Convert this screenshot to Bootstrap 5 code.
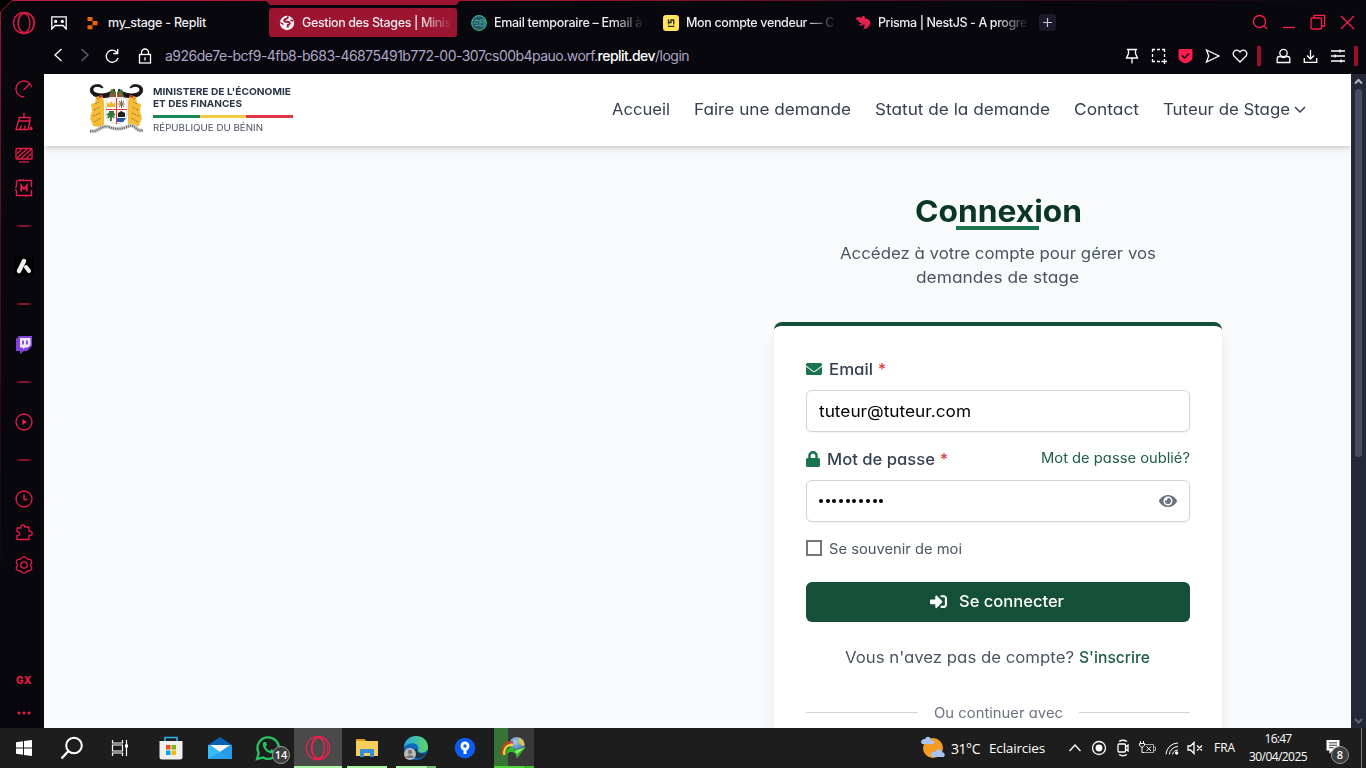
<!DOCTYPE html>
<html lang="fr">
<head>
<meta charset="utf-8">
<meta name="viewport" content="width=device-width, initial-scale=1">
<title>Gestion des Stages</title>
<link href="https://cdn.jsdelivr.net/npm/bootstrap@5.3.0/dist/css/bootstrap.min.css" rel="stylesheet">
<style>
:root{--gx:#fa1e4e;--ui:#08070d}
html,body{height:768px;overflow:hidden}
body{font-family:"Inter","Liberation Sans",sans-serif;background:var(--ui);color:#fff}
svg{display:block;flex:none}
.screen{width:1366px;height:768px;position:relative}
.middle{height:654px}
.ln{fill:none;stroke:currentColor;stroke-width:1.3}
.fit{display:inline-block;white-space:pre}
.frame-edge{position:absolute;left:0;top:0;z-index:3;pointer-events:none}
.tabstrip{height:40px;padding:5px 0 0}
.tabstrip .brand-cell{width:77px;padding-left:12px;gap:15px;height:36px}
.btab{width:188px;height:29px;margin-right:4px;padding-left:10px;gap:7px;border-radius:3px;font-size:12.5px;font-weight:500;color:#ececf0;margin-top:3px}
.btab.on{background:#9b1430}
.btab .ttl{width:150px;line-height:20px}
.btab .fade-end{-webkit-mask-image:linear-gradient(90deg,#000 118px,transparent 151px);mask-image:linear-gradient(90deg,#000 118px,transparent 151px)}
.newtab{width:17px;height:17px;border-radius:3px;background:#1c1a28;margin:9px 0 0 2px}
.winbtns{display:grid;grid-template-columns:30px 28px 30px 28px;color:var(--gx);margin-right:5px;height:36px;align-items:center;justify-items:center;margin-top:-1px}
.urlrow{height:34px;padding-bottom:3px}
.urlnav{display:grid;grid-template-columns:28px 26px 28px 38px;margin-left:44px;justify-items:center}
.urltext{font-size:14px;color:#aea5c6;line-height:20px;margin-left:1px}
.urltext b{font-weight:500;color:#fff}
.urltools{display:grid;grid-template-columns:repeat(5,27px) 12px 32px 27px 28px 8px;justify-items:center;align-items:center;margin-right:6px}
.redbar{width:4px;height:20px;background:#97112d;border-radius:1px}
.side{width:44px;color:#e81c49;display:grid;justify-items:center;align-items:center;padding-left:4px;grid-template-rows:30px 36px 30px 36px 40px 40px 36px 42px 36px 44px 32px 46px 20px 46px 80px 24px 36px}
.side hr{margin:0;border:0;opacity:1;width:18px;height:2px;background:linear-gradient(90deg,transparent,#851530 30%,#851530 70%,transparent)}
.gxword{font-size:10px;font-weight:800;line-height:12px}
.site{width:1307px;height:654px;background:#f9fafb;overflow:hidden;color:#374151;font-feature-settings:"cv11"}
.topnav{height:72px;background:#fff;box-shadow:0 4px 6px -1px rgba(0,0,0,.14),0 2px 4px -2px rgba(0,0,0,.12);padding:0 45px 0 43px;position:relative}
.topnav nav{padding-bottom:2px}
.topnav a{color:#374151;text-decoration:none;font-size:16px;line-height:24px}
.ministry{font-feature-settings:normal;color:#2b3445;padding-left:8px}
.ministry div{height:12px;line-height:12px;font-size:9.6px;font-weight:700}
.ministry .rep{font-weight:400;font-size:9px;color:#4b5563}
.flagline{height:3px!important;width:140px;margin:5px 0 3px}
.flagline i{flex:1}
.flagline .g{background:#198754}.flagline .y{background:#f6c945}.flagline .r{background:#e23744}
.pane{width:706px;padding-top:46px}
.h-login{font-size:30px;font-weight:700;color:#0a3626;line-height:39px;height:39px;margin:0}
.bar-u{width:83px;height:4px;background:#1a7450;margin:-5px 0 0 -1px}
.sub{font-size:16px;line-height:24px;color:#4b5563;margin:11px 0 33px -1px}
.logincard{width:448px;height:520px;border-top:4px solid #144f38;border-radius:8px;background:#fff;box-shadow:0 10px 15px -3px rgba(0,0,0,.1),0 4px 6px -4px rgba(0,0,0,.1);padding:31px 32px}
.lbl{height:24px;line-height:24px;font-size:16px;font-weight:500;color:#374151;gap:7px}
.lbl svg{fill:#1a7450}
.lbl svg{margin-left:0}
.req{color:#e03131;font-weight:400;margin-left:-2px}
.forgot{font-size:14px;font-weight:400;margin-top:-2px}
.field{height:42px;border:1px solid #d1d5db;border-radius:6px;background:#fff;color:#000;padding:0 12px 1px;box-shadow:0 1px 2px rgba(0,0,0,.06);font-size:16px;margin:9px 0 15px}
.dots{gap:2.7px}
.dots i{width:4px;height:4px;border-radius:50%;background:#000}
.link-g{color:#1c5d43;text-decoration:none}
.remember{height:20px;margin-top:16px;font-size:14px;gap:7px}
.box16{width:16px;height:16px;border:2px solid #767676;background:#fff}
.go{height:40px;border-radius:6px;background:#144f38;color:#fff;font-size:16px;font-weight:500;border:0;padding:0 2px 2px 0;gap:12px}
.signup{margin:23px 0 0 -1px;line-height:24px}
.signup a{font-weight:500}
.orline{margin-top:33px;height:20px;font-size:14px;color:#6b7280}
.dim{color:#4b5563}
.rule{height:1px;background:#d1d5db;flex:1}
.sbar{width:15px;background:#242735}
.thumb{width:7px;height:368px;border-radius:4px;background:#494b62;margin-top:1px}
.task{height:40px;background:#1d1d1d;font-family:"Open Sans","Noto Sans",sans-serif;color:#fff}
.apps{display:grid;grid-template-columns:48px 48px 48px 54px 44px 52px 48px 50px 48px 50px 48px;height:40px}
.app{display:flex;align-items:center;justify-content:center;position:relative}
.app::after{content:"";position:absolute;bottom:0;height:2px;width:0;background:#a9f5a5}
.app-front{background:#4a4a4a}
.app-front::after{width:48px}
.app-open::after{width:40px}
.app-edge::after{background:linear-gradient(90deg,#a9f5a5 31px,#587a57 31px,#7cb77a 32px)}
.app-idm{background:linear-gradient(90deg,transparent 4px,#387336 4px 18px,#383838 18px 44px,transparent 44px)}
.app-idm::after{background:linear-gradient(90deg,#4bd437 31px,#287e20 31px,#42b934 32px)}
.cnt{position:absolute;top:18px;border-radius:50%;background:#3d3d3d;border:1px solid #989898;width:18px;height:18px;line-height:15px;font-size:11px;font-weight:600;text-align:center}
.cnt-chat{left:30px}.cnt-note{left:7px}
.temp{font-size:14px;margin-left:6px}
.sky{font-size:13.5px;margin-left:9px}
.lang{font-size:12px;margin-left:9px}
.tray{display:grid;grid-template-columns:24px 24px 24px 24px 26px 20px;justify-items:center;align-items:center;margin-left:18px}
.clock{width:60px;font-size:12px;line-height:18px;text-align:center;margin-left:13px}
.notes{margin-left:16px;width:52px;height:40px}
.peek{width:1px;background:#77777a;margin:0 4px 0 -15px}
</style>
</head>
<body>
<div class="screen d-flex flex-column">
  <svg class="frame-edge" width="1366" height="640" viewBox="0 0 1366 640"><defs><linearGradient id="eh" gradientUnits="userSpaceOnUse" x1="0" y1="0" x2="1366" y2="0"><stop offset="0" stop-color="#c21a3e"/><stop offset=".4" stop-color="#a01634"/><stop offset=".7" stop-color="#3a0c1c"/><stop offset="1" stop-color="#08070d"/></linearGradient><linearGradient id="ev" gradientUnits="userSpaceOnUse" x1="0" y1="0" x2="0" y2="600"><stop offset="0" stop-color="#a01634"/><stop offset=".3" stop-color="#5d1024"/><stop offset="1" stop-color="#08070d"/></linearGradient></defs><path d="M0 0H12L0 12Z" fill="#000"/><path d="M12 .5H1366" stroke="url(#eh)"/><path d="M.5 12V600" stroke="url(#ev)"/><path d="M12 .5L.5 12" stroke="#a01634"/><path d="M265 0L270 5H456L461 0Z" fill="#9b1430"/></svg>

  <div class="tabstrip d-flex align-items-start">
    <div class="brand-cell d-flex align-items-center">
      <svg width="24" height="24" viewBox="0 0 24 24" fill="none" stroke="#d91d48" stroke-width="1.3"><circle cx="12" cy="12" r="10.5"/><ellipse cx="12" cy="12" rx="6" ry="9.7"/><ellipse cx="14" cy="12" rx="7.5" ry="9.5" stroke-width=".7"/></svg>
      <svg width="16" height="14" viewBox="0 0 16 14" fill="none" stroke="#fff" stroke-width="1.3"><path d="M.8.8H15.2V13L12 9.5H4L.8 13Z"/><circle cx="4.700" cy="5.400" r="1" fill="#fff"/><circle cx="11.300" cy="5.400" r="1" fill="#fff"/></svg>
    </div>
    <div class="btab d-flex align-items-center"><svg width="14" height="16" viewBox="0 0 14 16" fill="#f26207"><path d="M.5 2H5.500V6H.5ZM5.500 6H10.500V10.200H5.500ZM.5 10.200H5.500V14.300H.5Z"/></svg><div class="ttl"><span class="fit" data-w="98">my_stage - Replit</span></div></div>
    <div class="btab on d-flex align-items-center"><svg width="16" height="16" viewBox="0 0 16 16"><circle cx="8" cy="8" r="7.200" fill="#f0eef2"/><path d="M9.500 2C8 2.500 8.500 3.500 7 4C5 4.500 4.500 6 6 6.500L9.500 7C11.500 7.500 11 10 9 10L8.500 12.500" fill="none" stroke="#9b1430" stroke-width="1.900"/><path d="M1.500 7.500L4.500 9.500M11.500 5L14 6" stroke="#9b1430" stroke-width="1.500"/></svg><div class="ttl fade-end"><span class="fit" data-w="149">Gestion des Stages | Minis</span></div></div>
    <div class="btab d-flex align-items-center"><svg width="16" height="16" viewBox="0 0 16 16"><circle cx="8" cy="8" r="7.300" fill="#394b60" stroke="#22b996" stroke-width="1.300"/><path d="M3 5.500H8M2.500 8H7M4 10.500H8M9 5H13V11H9ZM9 6L11 8L13 6" fill="none" stroke="#2cb79b"/></svg><div class="ttl fade-end"><span class="fit" data-w="148">Email temporaire – Email à</span></div></div>
    <div class="btab d-flex align-items-center"><svg width="16" height="16" viewBox="0 0 16 16"><rect width="16" height="16" rx="3" fill="#ffe45c"/><path d="M5.500 4.500V7.500H8V5H10.700V8M8 5V4.500" fill="none" stroke="#29261a" stroke-width="1.300"/><path d="M5 11.300H11.300M5.500 9.500V8.300M10.800 9.500V8" fill="none" stroke="#29261a" stroke-width="1.300"/></svg><div class="ttl fade-end"><span class="fit" data-w="148">Mon compte vendeur — C</span></div></div>
    <div class="btab d-flex align-items-center"><svg width="16" height="16" viewBox="0 0 16 16" fill="#e0234e"><path d="M.5 4C2 1.500 5 1.500 6.500 3C6 1.800 7 1 8.500 1C10 1 10 2.500 9.500 3.500C12 3 15.500 5 15.500 8.500L14.500 9L15 11L13 11.500L12 13.500L10 13.500L8.500 15C8.500 13 10.500 11 9 9C8 10.500 5 11.300 3 10C4.500 10 6 9.500 6.500 8C4 8 3 7 3.500 5.500Z"/></svg><div class="ttl fade-end"><span class="fit" data-w="149">Prisma | NestJS - A progre</span></div></div>
    <div class="newtab d-flex align-items-center justify-content-center"><svg width="11" height="11" viewBox="0 0 11 11" stroke="#c8c2dc" stroke-width="1.200"><path d="M5.500 1V10M1 5.500H10"/></svg></div>
    <div class="winbtns ms-auto">
      <svg width="16" height="16" viewBox="0 0 16 16" class="ln"><circle cx="7.500" cy="7.500" r="6"/><path d="M12 12L15 15"/></svg>
      <svg width="14" height="16" viewBox="0 0 14 16" class="ln"><path d="M1 13.500H13"/></svg>
      <svg width="16" height="16" viewBox="0 0 16 16" class="ln"><rect x="1" y="4" width="10.500" height="11" rx="1"/><path d="M4 4V1.300H14.600V12H11.500"/></svg>
      <svg width="15" height="15" viewBox="0 0 15 15" class="ln"><path d="M1 1L14 14M14 1L1 14"/></svg>
    </div>
  </div>

  <div class="urlrow d-flex align-items-center">
    <div class="urlnav">
      <svg width="12" height="14" viewBox="0 0 12 14" class="ln"><path d="M9.500 1L3 7L9.500 13"/></svg>
      <svg width="12" height="14" viewBox="0 0 12 14" class="ln" color="#66656b"><path d="M2.500 1L9 7L2.500 13"/></svg>
      <svg width="16" height="16" viewBox="0 0 16 16" class="ln"><path d="M13 4.500A6 6 0 1 0 14 10M13.700 1V5.500H9.300"/></svg>
      <svg width="14" height="16" viewBox="0 0 14 16" class="ln"><rect x="1.500" y="6.500" width="11" height="8.500"/><path d="M3.500 6.500V4.500A3.500 3.500 0 0 1 10.500 4.500V6.500M7 9.300V12.500"/></svg>
    </div>
    <div class="urltext"><span class="fit" data-w="524">a926de7e-bcf9-4fb8-b683-46875491b772-00-307cs00b4pauo.worf.<b>replit.dev</b>/login</span></div>
    <div class="urltools ms-auto">
      <svg width="14" height="16" viewBox="0 0 14 16" class="ln"><path d="M2 1.500H12M3.500 1.500V5.500L1.500 10H12.500L10.500 5.500V1.500M7 10V15.500"/></svg>
      <svg width="16" height="16" viewBox="0 0 16 16" class="ln"><path d="M1.500 4V1.500H4M6 1.500H9M11 1.500H13.500V4M13.500 6V9M1.500 6V9M1.500 11V13.500H4M6 13.500H9M10.500 13.500H16M13.500 11V16"/></svg>
      <svg width="15" height="16" viewBox="0 0 15 16"><path d="M1.500 1H13.500L14.500 2V9.500C14.500 13 10 14.500 7.500 15.500C5 14.500.5 13 .5 9.500V2Z" fill="#fa1e4e"/><path d="M4 7.500L6.700 10L11 5.500" fill="none" stroke="#12070d" stroke-width="1.400"/></svg>
      <svg width="15" height="16" viewBox="0 0 15 16" class="ln"><path d="M1.500 2L14 8L1.500 14L3.700 8Z"/></svg>
      <svg width="16" height="16" viewBox="0 0 16 16" class="ln"><path d="M8 14L2 8C-.5 4.500 3.500.5 7 3L8 4L9 3C12.500.5 16.500 4.500 14 8Z"/></svg>
      <div class="redbar"></div>
      <svg width="15" height="16" viewBox="0 0 15 16" class="ln ms-1"><circle cx="7.500" cy="5" r="3.700"/><path d="M4.500 8.500H3A2 2 0 0 0 1.200 10.500V14.500H13.800V10.500A2 2 0 0 0 12 8.500H10.500C9.500 10 5.500 10 4.500 8.500Z"/></svg>
      <svg width="15" height="16" viewBox="0 0 15 16" class="ln"><path d="M1.300 10V14.300H13.700V10M7.500 2V10.500M4 7.500L7.500 11L11 7.500"/></svg>
      <svg width="16" height="16" viewBox="0 0 16 16" class="ln"><path d="M1 3H15M1 8H15M1 13H15"/><path d="M10 1.500V4.500M5 6.500V9.500M11 11.500V14.500"/></svg>
      <div class="redbar"></div>
    </div>
  </div>

  <div class="middle d-flex">
    <nav class="side">
      <svg width="18" height="18" viewBox="0 0 18 18" class="ln"><path d="M9 17A8 8 0 1 1 16.800 7.500M8.500 10L14.500 4"/></svg>
      <svg width="18" height="18" viewBox="0 0 18 18" class="ln"><path d="M9 0V4M4 4.500H15V8H4ZM3.500 8L1 16.500H13L15 8M5 16L6.500 12.500M9 16L10.500 12.500"/><circle cx="16" cy="15.500" r="1" fill="currentColor"/></svg>
      <svg width="18" height="16" viewBox="0 0 18 16" class="ln"><rect x="1" y="1.500" width="16" height="10.500" rx="1"/><path d="M2 6.500L7 2M2 11L12 2M6 11.500L16.500 2M11 11.500L16.500 6.500M4 14.800H14"/></svg>
      <svg width="18" height="18" viewBox="0 0 18 18" class="ln"><path d="M2 1.500H16.500V8M16.500 11V16.500H1.500V12M1.500 7V1.500M5 0V1.500M8 0V1.500M0 8H2M0 11H2M11 16.500V18"/><path d="M6.200 12.500V6.500L9 10L11.800 6.500V12.500" stroke-width="1.800"/></svg>
      <hr>
      <svg width="20" height="20" viewBox="0 0 20 20"><rect width="20" height="20" rx="3" fill="#000"/><path d="M10 5L5 15" stroke="#eee" stroke-width="4.500" stroke-linecap="round"/><path d="M12 11L15 15" stroke="#eee" stroke-width="4" stroke-linecap="round"/></svg>
      <hr>
      <svg width="18" height="18" viewBox="0 0 18 18" class="mt-1"><path d="M4 0H17V10L12 15H9L5 18V15H1V3Z" fill="#8142e0"/><path d="M5 2H15.500V9L13 11.500H10L8 13.500V11.500H5Z" fill="#efeaf7"/><path d="M8 4.500V8.500M12 4.500V8.500" stroke="#8142e0" stroke-width="1.800"/></svg>
      <hr>
      <svg width="18" height="18" viewBox="0 0 18 18" class="ln"><circle cx="9" cy="9" r="8"/><path d="M7.300 6V12L12 9Z" fill="currentColor" stroke="none"/></svg>
      <hr>
      <svg width="18" height="18" viewBox="0 0 18 18" class="ln"><circle cx="9" cy="9" r="8"/><path d="M9 4.500V9.500H12.500"/></svg>
      <svg width="18" height="17" viewBox="0 0 18 17" class="ln" stroke-linejoin="round"><path d="M2 4H6C5 0 10.500 0 9.500 3H14V7C18 6.500 18.500 12 14 11.500V15.500H2V11.500C5.500 12 5.500 7 2 7.500Z"/></svg>
      <svg width="18" height="18" viewBox="0 0 18 18" class="ln" stroke-linejoin="round"><path d="M7 1.500Q9 .3 11 1.500Q12 3.500 14.200 3.200Q16.500 3.500 16.800 5.500Q16.700 7 15.800 8.200Q15.300 9 15.800 9.800Q16.700 11 16.800 12.500Q16.500 14.500 14.200 14.800Q12 14.500 11 16.500Q9 17.700 7 16.500Q6 14.500 3.800 14.800Q1.500 14.500 1.200 12.500Q1.300 11 2.200 9.800Q2.700 9 2.200 8.200Q1.300 7 1.200 5.500Q1.500 3.500 3.800 3.200Q6 3.500 7 1.500Z"/><circle cx="9" cy="9" r="3.200"/></svg>
      <span></span>
      <span class="gxword"><span class="fit" data-w="16">GX</span></span>
      <svg width="14" height="10" viewBox="0 0 14 10" fill="currentColor"><circle cx="2" cy="8" r="1.500"/><circle cx="7" cy="8" r="1.500"/><circle cx="12" cy="8" r="1.500"/></svg>
    </nav>

    <main class="site">
      <header class="topnav d-flex align-items-center justify-content-between">
        <div class="d-flex align-items-center">
          <svg width="58" height="52" viewBox="0 0 58 52">
            <path d="M16 4C6 -1 3 7 9 9C14 11 22 10 27 5L28 9C24 14 18 14 11 13C2 12 1 2 8 1C12 0 15 1 16 4ZM43 4C52 -1 56 7 50 9C45 11 37 10 32 5L31 9C35 14 41 14 48 13C57 12 58 2 51 1C47 0 44 1 43 4Z" fill="#171717" stroke="#171717"/>
            <path d="M24 5L29 8V13H22ZM35 5L30 8V13H37Z" fill="#4f7037"/><path d="M24 9L28 10V13H23ZM35 9L31 10V13H36Z" fill="#9e5231"/>
            <path d="M15 11L9 13L8 19L4 20L5 27L3 34L6 42L12 43L17 41V17ZM43 11L49 13L50 19L54 20L53 27L55 34L52 42L46 43L41 41V17Z" fill="#f3bd3a"/>
            <path d="M8 20L12 18M7 26L13 23M6 32L13 29M7 38L14 34M10 14L13 16M50 20L46 18M51 26L45 23M52 32L45 29M51 38L44 34M48 14L45 16" stroke="#a37022" stroke-dasharray="2 1"/>
            <path d="M12 13L15 12M46 13L43 12" stroke="#c42525" stroke-width="2"/>
            <path d="M19 14H40V31C40 37 34 39 29.500 40C25 39 19 37 19 31Z" fill="#fff" stroke="#bbb" stroke-width=".6"/>
            <path d="M20 22V18L22 20L24 17L26 20L28 18V23H20Z" fill="#f3b72f"/><path d="M31 20H38M34.500 16V24M32 17L37 23M37 17L32 23" stroke="#776039"/>
            <path d="M24 37V29M20 31L24 28L28 31M21 34L24 29L27 34M22 28H27" stroke="#357339" stroke-width="1.800" fill="none"/>
            <path d="M31 29L34 27L38 29V33H31Z" fill="#222"/><path d="M30 34H39L36 38H30Z" fill="#235aa5"/>
            <path d="M19 25.500H40M29.500 14V40" stroke="#df4141" stroke-width="1.200"/>
            <path d="M3 47C12 49 14 40 22 43S36 45 42 42S49 49 56 46" fill="none" stroke="#d4d4d4" stroke-width="4"/><path d="M3 47C12 49 14 40 22 43S36 45 42 42S49 49 56 46" fill="none" stroke="#666" stroke-width="2" stroke-dasharray="1.200 1"/>
          </svg>
          <div class="ministry wide">
            <div><span class="fit" data-w="138">MINISTERE DE L'ÉCONOMIE</span></div>
            <div><span class="fit" data-w="89">ET DES FINANCES</span></div>
            <div class="flagline d-flex"><i class="g"></i><i class="y"></i><i class="r"></i></div>
            <div class="rep mt-1"><span class="fit" data-w="110">RÉPUBLIQUE DU BÉNIN</span></div>
          </div>
        </div>
        <nav class="wide d-flex align-items-center gap-4">
          <a href="#" class="fit" data-w="58">Accueil</a>
          <a href="#" class="fit" data-w="157">Faire une demande</a>
          <a href="#" class="fit" data-w="175">Statut de la demande</a>
          <a href="#" class="fit" data-w="65">Contact</a>
          <span class="d-flex align-items-center gap-1"><a href="#" class="fit" data-w="127">Tuteur de Stage</a><svg width="12" height="12" viewBox="0 0 12 12" fill="none" stroke="#374151" stroke-width="1.500"><path d="M1 4L6 9L11 4"/></svg></span>
        </nav>
      </header>
      <section class="pane wide ms-auto d-flex flex-column align-items-center">
        <h1 class="h-login"><span class="fit" data-w="167">Connexion</span></h1>
        <div class="bar-u"></div>
        <p class="sub text-center"><span class="fit" data-w="316">Accédez à votre compte pour gérer vos</span><br><span class="fit" data-w="163">demandes de stage</span></p>
        <form class="logincard" onsubmit="return false">
          <div class="lbl d-flex align-items-center"><svg width="16" height="16" viewBox="0 0 512 512"><path d="M502.300 190.800c3.900-3.100 9.700-.2 9.700 4.700V400c0 26.500-21.500 48-48 48H48c-26.500 0-48-21.500-48-48V195.600c0-5 5.700-7.800 9.700-4.700 22.400 17.400 52.100 39.500 154.100 113.600 21.100 15.400 56.700 47.800 92.200 47.600 35.700.3 72-32.800 92.300-47.600 102-74.100 131.600-96.300 154-113.700zM256 320c23.200.4 56.600-29.200 73.400-41.400 132.700-96.300 142.800-104.700 173.400-128.700 5.800-4.500 9.200-11.500 9.200-18.900v-19c0-26.500-21.500-48-48-48H48c-26.500 0-48 21.500-48 48v19c0 7.400 3.400 14.300 9.200 18.900 30.600 23.900 40.700 32.400 173.400 128.700 16.800 12.200 50.200 41.800 73.400 41.400z"/></svg><span class="fit" data-w="44">Email</span><span class="req">*</span></div>
          <div class="field d-flex align-items-center"><span class="fit" data-w="152">tuteur@tuteur.com</span></div>
          <div class="lbl d-flex align-items-center"><svg width="14" height="16" viewBox="0 0 448 512"><path d="M400 224h-24v-72C376 68.200 307.800 0 224 0S72 68.200 72 152v72H48c-26.500 0-48 21.500-48 48v192c0 26.500 21.500 48 48 48h352c26.500 0 48-21.500 48-48V272c0-26.500-21.500-48-48-48zm-104 0H152v-72c0-39.700 32.300-72 72-72s72 32.300 72 72v72z"/></svg><span class="fit" data-w="108">Mot de passe</span><span class="req">*</span><a href="#" class="link-g forgot ms-auto"><span class="fit" data-w="149">Mot de passe oublié?</span></a></div>
          <div class="field d-flex align-items-center justify-content-between"><span class="dots d-flex"><i></i><i></i><i></i><i></i><i></i><i></i><i></i><i></i><i></i><i></i></span><svg width="18" height="16" viewBox="0 0 576 512" fill="#6b7280"><path d="M572.520 241.400C518.290 135.590 410.930 64 288 64S57.680 135.640 3.480 241.410a32.350 32.350 0 0 0 0 29.190C57.710 376.410 165.070 448 288 448s230.320-71.640 284.520-177.410a32.350 32.350 0 0 0 0-29.190zM288 400a144 144 0 1 1 144-144 143.930 143.930 0 0 1-144 144zm0-240a95.310 95.310 0 0 0-25.310 3.790 47.850 47.850 0 0 1-66.900 66.900A95.780 95.780 0 1 0 288 160z"/></svg></div>
          <div class="remember d-flex align-items-center"><span class="box16"></span><span class="fit dim" data-w="133">Se souvenir de moi</span></div>
          <button class="go w-100 d-flex align-items-center justify-content-center mt-4"><svg width="17" height="17" viewBox="0 0 512 512" fill="#fff"><path d="M416 448h-84c-6.600 0-12-5.400-12-12v-40c0-6.600 5.400-12 12-12h84c17.700 0 32-14.300 32-32V160c0-17.700-14.300-32-32-32h-84c-6.600 0-12-5.400-12-12V76c0-6.600 5.400-12 12-12h84c53 0 96 43 96 96v192c0 53-43 96-96 96zm-47-201L201 79c-15-15-41-4.500-41 17v96H24c-13.300 0-24 10.700-24 24v96c0 13.300 10.700 24 24 24h136v96c0 21.500 26 32 41 17l168-168c9.300-9.400 9.300-24.600 0-34z"/></svg><span class="fit" data-w="105">Se connecter</span></button>
          <p class="signup text-center dim"><span class="fit" data-w="229">Vous n'avez pas de compte?</span> <a href="#" class="link-g"><span class="fit" data-w="71">S'inscrire</span></a></p>
          <div class="orline d-flex align-items-center gap-3"><span class="rule"></span><span class="fit" data-w="129">Ou continuer avec</span><span class="rule"></span></div>
        </form>
      </section>
    </main>

    <div class="sbar d-flex flex-column align-items-center">
      <svg width="9" height="14" viewBox="0 0 9 14" fill="none" stroke="#b5b5bd" stroke-width="2"><path d="M1 9.500L4.500 6L8 9.500"/></svg>
      <div class="thumb"></div>
      <svg class="mt-auto" width="9" height="14" viewBox="0 0 9 14" fill="none" stroke="#62636d" stroke-width="2"><path d="M1 5L4.500 8.500L8 5"/></svg>
    </div>
  </div>

  <footer class="task d-flex">
    <div class="apps">
      <div class="app"><svg width="16" height="16" viewBox="0 0 16 16" fill="#fff"><path d="M0 2.200L7 1.300V7.500H0ZM8 1.100L16 0V7.500H8ZM0 8.500H7V14.700L0 13.800ZM8 8.500H16V16L8 14.900Z"/></svg></div>
      <div class="app"><svg width="24" height="24" viewBox="0 0 24 24" fill="none" stroke="#fff" stroke-width="2"><circle cx="14" cy="9.500" r="7.800"/><path d="M8.500 15L1.500 22.500" stroke-width="2.400"/></svg></div>
      <div class="app"><svg width="18" height="18" viewBox="0 0 18 18" fill="none" stroke="#fff" stroke-width="1.200"><path d="M1.500 1V4H11.500V1M1.500 17V14H11.500V17M1.500 6H11.500V12H1.500ZM15.500 1V17"/><rect x="14" y="5.500" width="3" height="3" fill="#fff" stroke="none"/></svg></div>
      <div class="app"><svg width="24" height="24" viewBox="0 0 24 24"><path d="M6 6V1.500H18V6" fill="none" stroke="#28b2e9" stroke-width="1.600"/><path d="M.5 5H23.500V21Q23.500 23.500 21 23.500H3Q.5 23.500.5 21Z" fill="#f0f0f0"/><path d="M7 9H11.500V13.500H7Z" fill="#f25022"/><path d="M12.500 9H17V13.500H12.500Z" fill="#7fba00"/><path d="M7 14.500H11.500V19H7Z" fill="#00a4ef"/><path d="M12.500 14.500H17V19H12.500Z" fill="#ffb900"/></svg></div>
      <div class="app"><svg width="24" height="24" viewBox="0 0 24 24"><path d="M0 9L12 1L24 9V13H0Z" fill="#0a62b5"/><path d="M0 9H24V23H0Z" fill="#2c9fe8"/><path d="M2 9H22L12 16Z" fill="#f5f5f5"/><path d="M0 9L24 23H0Z" fill="#36bdf7"/><path d="M24 9L0 23H24Z" fill="#2499e8" opacity=".7"/></svg></div>
      <div class="app"><svg width="26" height="26" viewBox="0 0 26 26"><path d="M2 24L3.700 18A10.700 10.700 0 1 1 8 22.400Z" fill="none" stroke="#25c560" stroke-width="2.300"/><path d="M8.500 7C6 11 11 18.500 17.500 18.500C20 17 19 15 16.500 14L15 16C12.500 15 11 13 10.500 11.500L12 10L11 7Z" fill="#25c560"/></svg><span class="cnt cnt-chat">14</span></div>
      <div class="app app-front"><svg width="26" height="26" viewBox="0 0 24 24" fill="none" stroke="#f0204f" stroke-width="1.200"><circle cx="12" cy="12" r="10.800"/><ellipse cx="12" cy="12" rx="6" ry="10"/><ellipse cx="14" cy="12" rx="7" ry="9.500" stroke-width=".7"/></svg></div>
      <div class="app app-open"><svg width="22" height="20" viewBox="0 0 22 20"><path d="M0 1H8L10 3H22V18H0Z" fill="#f9ce5a"/><path d="M0 1H8L10 3H0Z" fill="#dc9c1b"/><path d="M4 19V11H18V19H14V15H8V19Z" fill="#338fd9"/></svg></div>
      <div class="app app-open app-edge"><svg width="26" height="26" viewBox="0 0 26 26"><defs><linearGradient id="eg" x1="0" y1="0" x2="1" y2="0"><stop stop-color="#2aa7e6"/><stop offset="1" stop-color="#5bd765"/></linearGradient></defs><circle cx="13" cy="13" r="12" fill="#1368b9"/><path d="M1 12C2 -2 24 -3 25 12C25 19 15 19 15 15C17 7 6 6 1 12Z" fill="url(#eg)"/><path d="M14 14C13 19 20 20 24 17C21 22 17 24 13 23C9 20 9 14 14 14Z" fill="#1d3342"/><circle cx="7" cy="19" r="6" fill="#bbb"/><circle cx="7" cy="17" r="2.200" fill="#777"/><path d="M3 23C3 19 11 19 11 23Z" fill="#777"/></svg></div>
      <div class="app"><svg width="22" height="22" viewBox="0 0 22 22"><circle cx="11" cy="11" r="10.300" fill="#0b5cf0"/><circle cx="11" cy="9" r="4.500" fill="#fff"/><circle cx="11" cy="9" r="1.700" fill="#0b5cf0"/><path d="M9.500 12H12.500V17H9.500Z" fill="#fff"/></svg></div>
      <div class="app app-open app-idm"><svg width="26" height="24" viewBox="0 0 26 24"><defs><radialGradient id="gl" cx=".4" cy=".3" r=".8"><stop stop-color="#a9cdf0"/><stop offset="1" stop-color="#1f4d92"/></radialGradient></defs><circle cx="16" cy="9" r="8" fill="url(#gl)"/><path d="M17 2C21 2 23 5 23.500 9C21 12 20 8 18 7Z" fill="#d8c651"/><path d="M1.500 19C-.5 10 6 5 12 6.500" fill="none" stroke="#d63a21" stroke-width="2"/><path d="M3.500 19C2 13 6 8 12 9" fill="none" stroke="#f4d82b" stroke-width="2.200"/><path d="M5 18C5 13 9 10 13 12L14 14L24.500 11L16 22.500L14.500 18C11 15 8 16 5 18Z" fill="#35b52a"/><path d="M14 15L24 11.500L15.500 18Z" fill="#8ef06c"/></svg></div>
    </div>
    <div class="d-flex align-items-center ms-auto">
      <svg width="25" height="24" viewBox="0 0 25 24"><circle cx="13" cy="12" r="10" fill="#f59b23"/><path d="M2 8C-1 4 4 3 5 3C7 -1 11 1 11 4C15 4 15 8 12 8ZM12 21C9 18 13 15 15 16C17 12 22 13 22 16C26 17 25 21 23 21Z" fill="#a8c4ed"/></svg>
      <span class="temp"><span class="fit" data-w="29">31°C</span></span><span class="sky"><span class="fit" data-w="56">Eclaircies</span></span>
      <div class="tray">
        <svg width="14" height="10" viewBox="0 0 14 10" class="ln"><path d="M1.500 8L7 2L12.500 8"/></svg>
        <svg width="16" height="16" viewBox="0 0 16 16" class="ln"><circle cx="8" cy="8" r="6.500"/><circle cx="8" cy="8" r="2.800" fill="#fff"/></svg>
        <svg width="14" height="18" viewBox="0 0 14 18" class="ln"><rect x="2" y="5" width="7.500" height="8" rx="1"/><path d="M9.500 8L12 6V12L9.500 10M3 2.500Q7 0 11 2.500M3 15.500Q7 18 11 15.500"/></svg>
        <svg width="17" height="14" viewBox="0 0 17 14" fill="none" stroke="#fff"><path d="M6 3.500H14.500V11.500H5M15 6H16.500V9.500H15" stroke="#aaa"/><path d="M7.500 5.500L12 10M12 5.500L7.500 10M1.500 0V2.500M4.500 0V2.500M.5 2.500H5.500V4.500L3 6.500L.5 4.500ZM3 6V11.500H5"/></svg>
        <svg width="14" height="14" viewBox="0 0 14 14" fill="none" stroke="#fff" stroke-width="1"><path d="M1 13.500A12 12 0 0 1 13 2M4.300 13.500A9 9 0 0 1 13 5.500M7.500 13.500A6 6 0 0 1 13 9"/><circle cx="11.700" cy="12" r="1.200" fill="#fff"/></svg>
        <svg width="16" height="14" viewBox="0 0 16 14" class="ln"><path d="M1 5H3.500L7 1.500V12.500L3.500 9H1ZM10 4.500L15 9.500M15 4.500L10 9.500"/></svg>
      </div>
      <span class="lang"><span class="fit" data-w="21">FRA</span></span>
      <div class="clock"><span class="fit" data-w="27">16:47</span><br><span class="fit" data-w="58">30/04/2025</span></div>
      <div class="notes position-relative"><svg class="mt-2 pt-1" width="18" height="21" viewBox="0 0 18 21"><path d="M1 0H17V13H9L4.500 17V13H1Z" fill="#fff"/><path d="M4 3.500H14M4 6.500H14M4 9.500H10" stroke="#222" stroke-width="1.100"/></svg><span class="cnt cnt-note">8</span></div>
    </div>
    <div class="peek"></div>
  </footer>
</div>
<script src="https://cdn.jsdelivr.net/npm/bootstrap@5.3.0/dist/js/bootstrap.bundle.min.js"></script>
<script>
document.querySelectorAll('.fit').forEach(function (el) {
  var w = +el.dataset.w, now = el.getBoundingClientRect().width;
  if (el.closest('.wide')) {
    el.style.transformOrigin = 'left center';
    el.style.transform = 'scaleX(' + w / now + ')';
    el.style.marginRight = (w - now) + 'px';
  } else {
    el.style.letterSpacing = ((w - now) / el.textContent.length) + 'px';
  }
});
</script>
</body>
</html>
